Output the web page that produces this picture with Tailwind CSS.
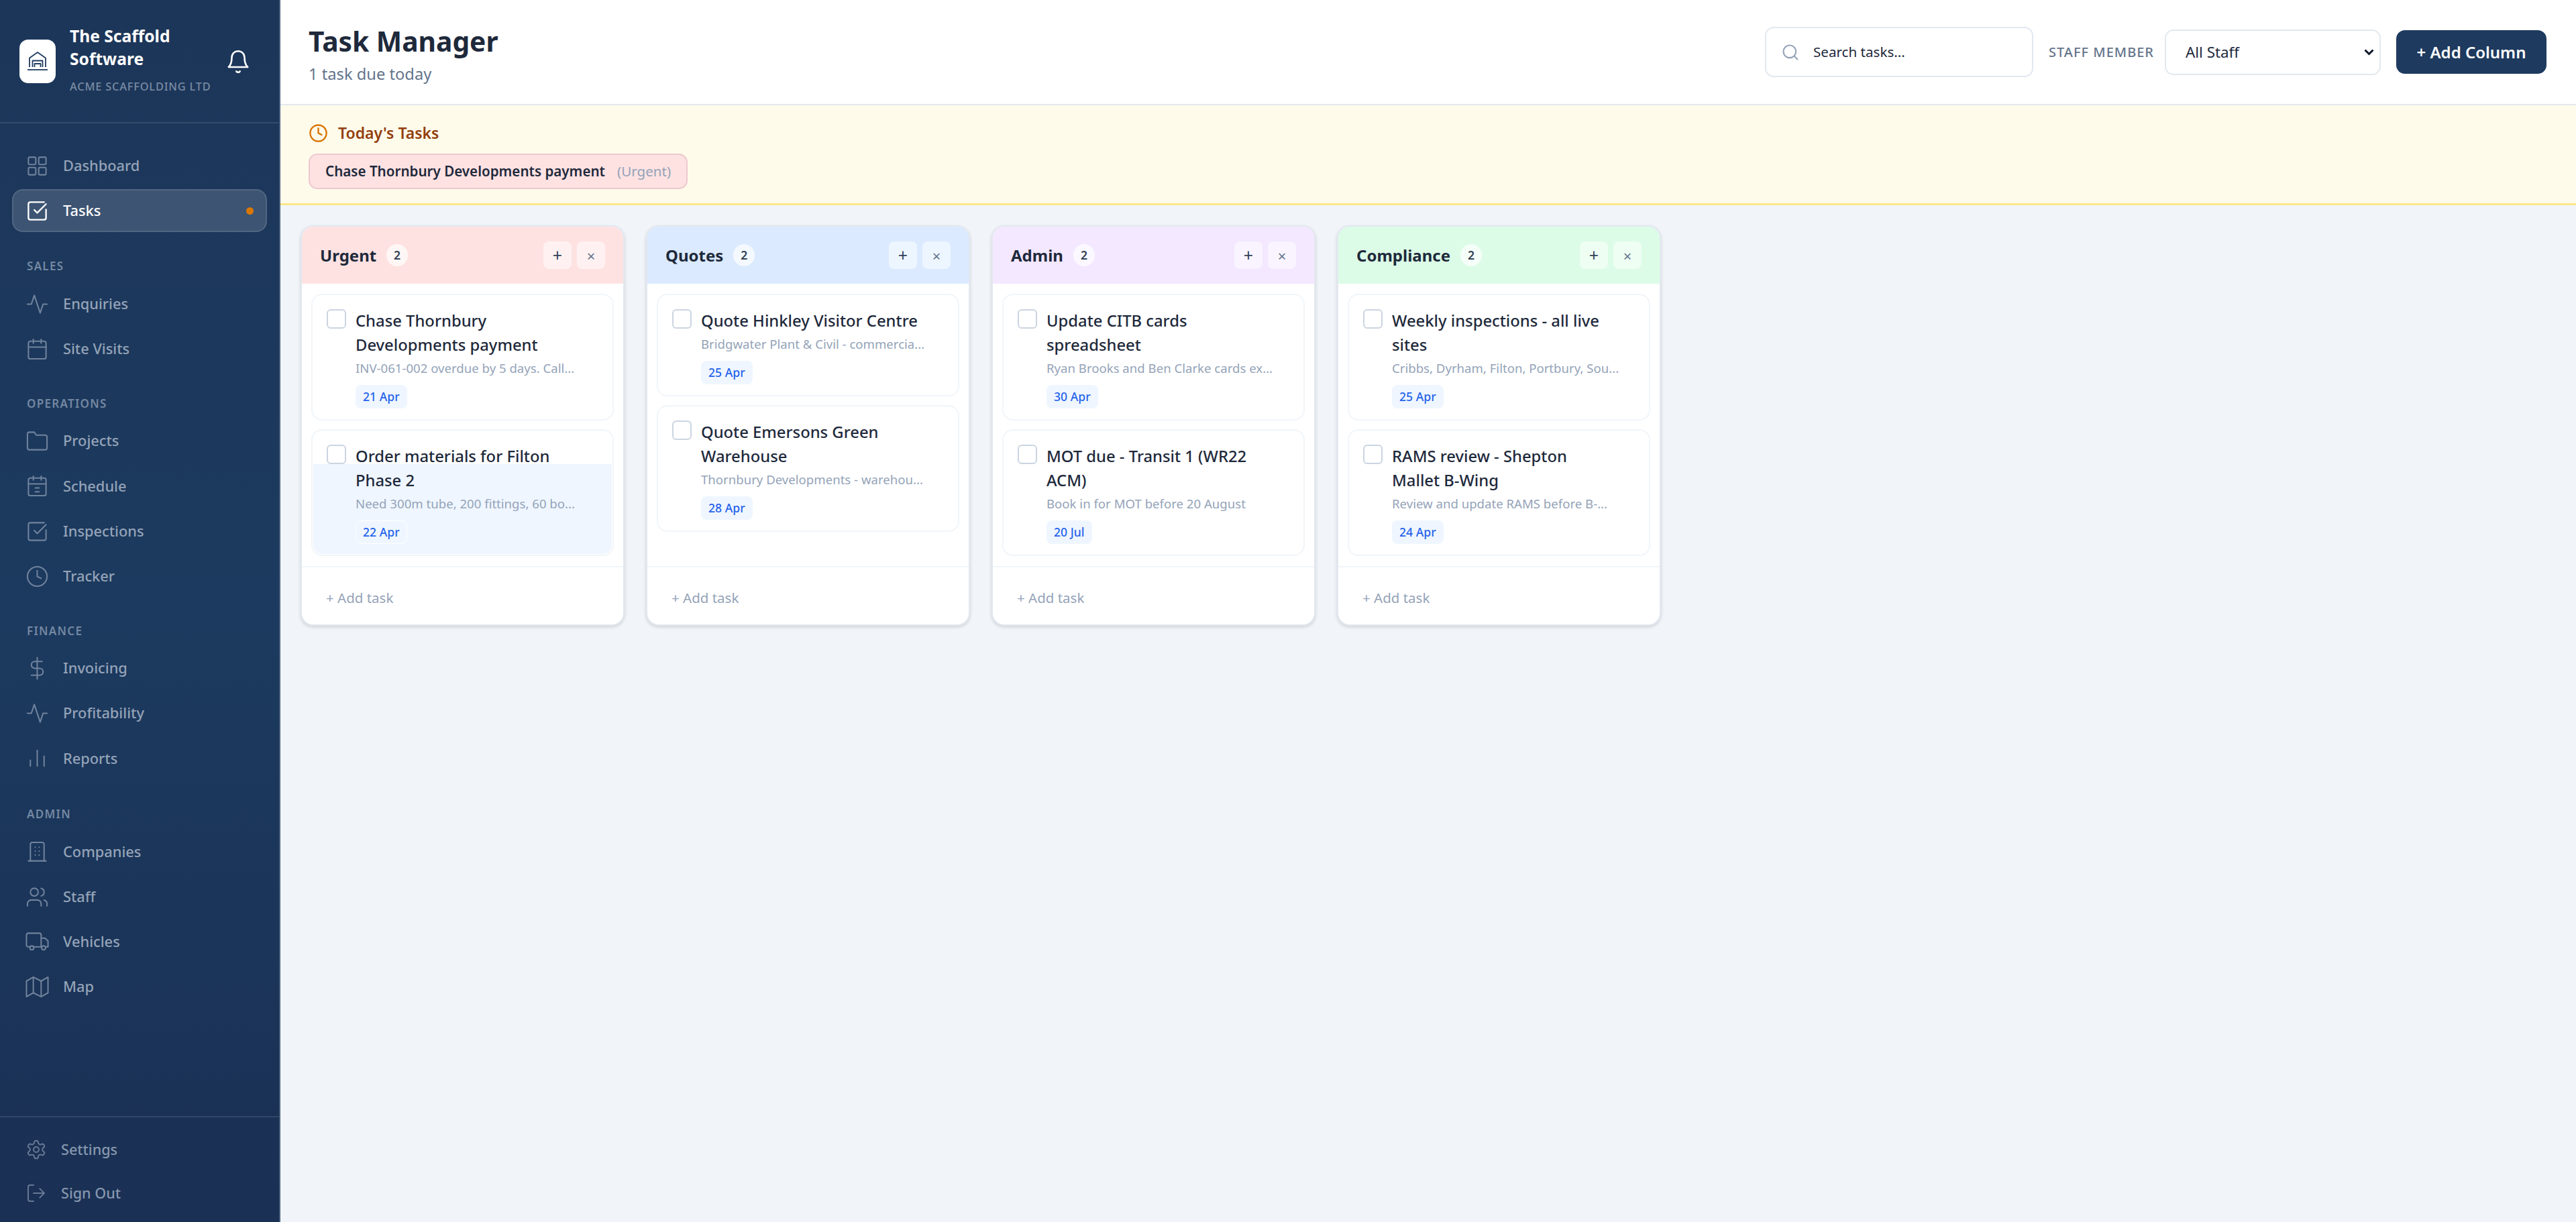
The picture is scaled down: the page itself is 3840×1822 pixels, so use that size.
<!DOCTYPE html>
<html lang="en">
<head>
    <meta charset="UTF-8">
    <meta name="viewport" content="width=device-width, initial-scale=1.0">
    <title>Task Manager</title>
    <script src="https://cdn.jsdelivr.net/npm/@tailwindcss/browser@4"></script>
</head>
<body class="h-[1822px] w-[3840px] overflow-hidden bg-[#f1f5f9] font-['Noto_Sans',sans-serif] text-[#1e293b]">
<div class="flex h-full">

    <!-- Sidebar -->
    <aside class="flex h-full w-[418px] shrink-0 flex-col border-r-2 border-[#4a5f7d] bg-linear-to-b from-[#1c3659] via-[#1c3a5f] to-[#1a3054]">
        <div class="flex h-[184px] items-center border-b-2 border-white/10 pl-[29px] pr-[42px]">
            <div class="flex h-[65px] w-[54px] shrink-0 items-center justify-center rounded-[13px] bg-white">
                <svg class="h-[30px] w-[30px]" viewBox="0 0 30 30" fill="none" stroke="#1e3a5f" stroke-width="1.8" stroke-linejoin="round">
                    <path d="M3 24V10.5L15 2l12 8.5V24"/>
                    <path d="M7.5 24V14.5h15V24"/>
                    <path d="M10.5 24v-5h9v5"/>
                    <path d="M0 28h30"/>
                </svg>
            </div>
            <div class="mb-[5px] ml-[21px] min-w-0 flex-1">
                <div class="text-[24.6px] leading-[34px] font-bold text-white">The Scaffold Software</div>
                <div class="mt-[13px] text-[16.4px] leading-[22px] font-medium tracking-[0.8px] whitespace-nowrap text-[#7b8ca4]">ACME SCAFFOLDING LTD</div>
            </div>
            <svg class="h-[38px] w-[38px] shrink-0 translate-y-[1px]" viewBox="0 0 24 24" fill="none" stroke="#fff" stroke-width="1.6" stroke-linecap="round" stroke-linejoin="round">
                <path d="M18 8A6 6 0 0 0 6 8c0 7-3 9-3 9h18s-3-2-3-9"/>
                <path d="M13.73 21a2 2 0 0 1-3.46 0"/>
            </svg>
        </div>

        <nav class="flex-1 px-[18px] pt-[31px] text-[21.8px] font-medium text-[#94a3b8]">
            <a class="mb-[3.2px] flex h-[64px] items-center gap-[21px] pl-[20px]">
                <svg class="h-[35px] w-[35px] shrink-0 opacity-70" viewBox="0 0 24 24" fill="none" stroke="currentColor" stroke-width="1.4" stroke-linejoin="round"><rect x="3" y="3" width="7.5" height="7.5" rx="1"/><rect x="13.5" y="3" width="7.5" height="7.5" rx="1"/><rect x="3" y="13.5" width="7.5" height="7.5" rx="1"/><rect x="13.5" y="13.5" width="7.5" height="7.5" rx="1"/></svg>
                Dashboard
            </a>
            <a class="mb-[3.2px] flex h-[64px] items-center gap-[21px] rounded-[16px] border-2 border-white/10 bg-white/15 pl-[18px] pr-[18px] text-white">
                <svg class="h-[35px] w-[35px] shrink-0" viewBox="0 0 24 24" fill="none" stroke="currentColor" stroke-width="1.6" stroke-linecap="round" stroke-linejoin="round"><path d="M21 10.5V19a2 2 0 0 1-2 2H5a2 2 0 0 1-2-2V5a2 2 0 0 1 2-2h14"/><path d="m9 11 3 3 9-9"/></svg>
                Tasks
                <span class="ml-auto h-[11px] w-[11px] rounded-full bg-[#d97706]"></span>
            </a>

            <div class="mb-[12px] pt-[36px] pl-[22px] text-[17px] leading-[24px] font-semibold tracking-[1.3px] text-[#7488a2]">SALES</div>
            <a class="mb-[3.2px] flex h-[64px] items-center gap-[21px] pl-[20px]">
                <svg class="h-[35px] w-[35px] shrink-0 opacity-70" viewBox="0 0 24 24" fill="none" stroke="currentColor" stroke-width="1.4" stroke-linecap="round" stroke-linejoin="round"><path d="M22 12h-4l-3 9L9 3l-3 9H2"/></svg>
                Enquiries
            </a>
            <a class="mb-[3.2px] flex h-[64px] items-center gap-[21px] pl-[20px]">
                <svg class="h-[35px] w-[35px] shrink-0 opacity-70" viewBox="0 0 24 24" fill="none" stroke="currentColor" stroke-width="1.4" stroke-linecap="round" stroke-linejoin="round"><rect x="3" y="4" width="18" height="18" rx="2"/><path d="M16 2v4M8 2v4M3 10h18"/></svg>
                Site Visits
            </a>

            <div class="mb-[12px] pt-[34px] pl-[22px] text-[17px] leading-[24px] font-semibold tracking-[1.3px] text-[#7488a2]">OPERATIONS</div>
            <a class="mb-[3.2px] flex h-[64px] items-center gap-[21px] pl-[20px]">
                <svg class="h-[35px] w-[35px] shrink-0 opacity-70" viewBox="0 0 24 24" fill="none" stroke="currentColor" stroke-width="1.4" stroke-linecap="round" stroke-linejoin="round"><path d="M22 19a2 2 0 0 1-2 2H4a2 2 0 0 1-2-2V5a2 2 0 0 1 2-2h5l2 3h9a2 2 0 0 1 2 2z"/></svg>
                Projects
            </a>
            <a class="mb-[3.2px] flex h-[64px] items-center gap-[21px] pl-[20px]">
                <svg class="h-[35px] w-[35px] shrink-0 opacity-70" viewBox="0 0 24 24" fill="none" stroke="currentColor" stroke-width="1.4" stroke-linecap="round" stroke-linejoin="round"><rect x="3" y="4" width="18" height="18" rx="2"/><path d="M16 2v4M8 2v4M3 10h18M10 14h4M10 18h4"/></svg>
                Schedule
            </a>
            <a class="mb-[3.2px] flex h-[64px] items-center gap-[21px] pl-[20px]">
                <svg class="h-[35px] w-[35px] shrink-0 opacity-70" viewBox="0 0 24 24" fill="none" stroke="currentColor" stroke-width="1.4" stroke-linecap="round" stroke-linejoin="round"><path d="M21 10.5V19a2 2 0 0 1-2 2H5a2 2 0 0 1-2-2V5a2 2 0 0 1 2-2h14"/><path d="m9 11 3 3 9-9"/></svg>
                Inspections
            </a>
            <a class="mb-[3.2px] flex h-[64px] items-center gap-[21px] pl-[20px]">
                <svg class="h-[35px] w-[35px] shrink-0 opacity-70" viewBox="0 0 24 24" fill="none" stroke="currentColor" stroke-width="1.4" stroke-linecap="round" stroke-linejoin="round"><circle cx="12" cy="12" r="10"/><path d="M12 6v6l4 2"/></svg>
                Tracker
            </a>

            <div class="mb-[12px] pt-[34px] pl-[22px] text-[17px] leading-[24px] font-semibold tracking-[1.3px] text-[#7488a2]">FINANCE</div>
            <a class="mb-[3.2px] flex h-[64px] items-center gap-[21px] pl-[20px]">
                <svg class="h-[35px] w-[35px] shrink-0 opacity-70" viewBox="0 0 24 24" fill="none" stroke="currentColor" stroke-width="1.4" stroke-linecap="round" stroke-linejoin="round"><path d="M12 1v22"/><path d="M17 5H9.5a3.5 3.5 0 0 0 0 7h5a3.5 3.5 0 0 1 0 7H6"/></svg>
                Invoicing
            </a>
            <a class="mb-[3.2px] flex h-[64px] items-center gap-[21px] pl-[20px]">
                <svg class="h-[35px] w-[35px] shrink-0 opacity-70" viewBox="0 0 24 24" fill="none" stroke="currentColor" stroke-width="1.4" stroke-linecap="round" stroke-linejoin="round"><path d="M22 12h-4l-3 9L9 3l-3 9H2"/></svg>
                Profitability
            </a>
            <a class="mb-[3.2px] flex h-[64px] items-center gap-[21px] pl-[20px]">
                <svg class="h-[35px] w-[35px] shrink-0 opacity-70" viewBox="0 0 24 24" fill="none" stroke="currentColor" stroke-width="1.4" stroke-linecap="round" stroke-linejoin="round"><path d="M19 20V10M12 20V4M5 20v-6"/></svg>
                Reports
            </a>

            <div class="mb-[12px] pt-[36px] pl-[22px] text-[17px] leading-[24px] font-semibold tracking-[1.3px] text-[#7488a2]">ADMIN</div>
            <a class="mb-[3.2px] flex h-[64px] items-center gap-[21px] pl-[20px]">
                <svg class="h-[35px] w-[35px] shrink-0 opacity-70" viewBox="0 0 24 24" fill="none" stroke="currentColor" stroke-width="1.4" stroke-linecap="round" stroke-linejoin="round"><path d="M5 21V4a2 2 0 0 1 2-2h10a2 2 0 0 1 2 2v17"/><path d="M3 21h18M10 7h.01M14 7h.01M10 11h.01M14 11h.01M10 15h.01M14 15h.01"/></svg>
                Companies
            </a>
            <a class="mb-[3.2px] flex h-[64px] items-center gap-[21px] pl-[20px]">
                <svg class="h-[35px] w-[35px] shrink-0 opacity-70" viewBox="0 0 24 24" fill="none" stroke="currentColor" stroke-width="1.4" stroke-linecap="round" stroke-linejoin="round"><path d="M16 21v-2a4 4 0 0 0-4-4H6a4 4 0 0 0-4 4v2"/><circle cx="9" cy="7" r="4"/><path d="M22 21v-2a4 4 0 0 0-3-3.87"/><path d="M16 3.13a4 4 0 0 1 0 7.75"/></svg>
                Staff
            </a>
            <a class="mb-[3.2px] flex h-[64px] items-center gap-[21px] pl-[20px]">
                <svg class="h-[35px] w-[35px] shrink-0 opacity-70" viewBox="0 0 24 24" fill="none" stroke="currentColor" stroke-width="1.4" stroke-linecap="round" stroke-linejoin="round"><path d="M5 17H3a2 2 0 0 1-2-2V5a2 2 0 0 1 2-2h11a2 2 0 0 1 2 2v12H8"/><path d="M16 8h4l3 3v6h-2"/><circle cx="6.5" cy="18" r="2"/><circle cx="18.5" cy="18" r="2"/><path d="M16 17h.5"/></svg>
                Vehicles
            </a>
            <a class="flex h-[64px] items-center gap-[21px] pl-[20px]">
                <svg class="h-[35px] w-[35px] shrink-0 opacity-70" viewBox="0 0 24 24" fill="none" stroke="currentColor" stroke-width="1.4" stroke-linecap="round" stroke-linejoin="round"><path d="M1 6v16l7-4 8 4 7-4V2l-7 4-8-4z"/><path d="M8 2v16M16 6v16"/></svg>
                Map
            </a>
        </nav>

        <div class="h-[158px] border-t-2 border-white/10 px-[18px] pt-[16px] text-[21.6px] font-medium text-[#8697ae]">
            <a class="flex h-[64px] items-center gap-[21px] pl-[20px]">
                <svg class="h-[32px] w-[32px] shrink-0 opacity-70" viewBox="0 0 24 24" fill="none" stroke="currentColor" stroke-width="1.5" stroke-linecap="round" stroke-linejoin="round"><path d="M12.22 2h-.44a2 2 0 0 0-2 2v.18a2 2 0 0 1-1 1.73l-.43.25a2 2 0 0 1-2 0l-.15-.08a2 2 0 0 0-2.73.73l-.22.38a2 2 0 0 0 .73 2.73l.15.1a2 2 0 0 1 1 1.72v.51a2 2 0 0 1-1 1.74l-.15.09a2 2 0 0 0-.73 2.73l.22.38a2 2 0 0 0 2.73.73l.15-.08a2 2 0 0 1 2 0l.43.25a2 2 0 0 1 1 1.73V20a2 2 0 0 0 2 2h.44a2 2 0 0 0 2-2v-.18a2 2 0 0 1 1-1.73l.43-.25a2 2 0 0 1 2 0l.15.08a2 2 0 0 0 2.73-.73l.22-.39a2 2 0 0 0-.73-2.73l-.15-.08a2 2 0 0 1-1-1.74v-.5a2 2 0 0 1 1-1.74l.15-.09a2 2 0 0 0 .73-2.73l-.22-.38a2 2 0 0 0-2.73-.73l-.15.08a2 2 0 0 1-2 0l-.43-.25a2 2 0 0 1-1-1.73V4a2 2 0 0 0-2-2z"/><circle cx="12" cy="12" r="3"/></svg>
                Settings
            </a>
            <a class="mt-[1px] flex h-[64px] items-center gap-[21px] pl-[20px]">
                <svg class="h-[32px] w-[32px] shrink-0 opacity-70" viewBox="0 0 24 24" fill="none" stroke="currentColor" stroke-width="1.5" stroke-linecap="round" stroke-linejoin="round"><path d="M9 21H5a2 2 0 0 1-2-2V5a2 2 0 0 1 2-2h4"/><path d="m16 17 5-5-5-5M21 12H9"/></svg>
                Sign Out
            </a>
        </div>
    </aside>

    <!-- Main -->
    <main class="flex min-w-0 flex-1 flex-col">
        <header class="flex h-[157px] shrink-0 items-center justify-between border-b-2 border-[#e2e8f0] bg-white pl-[42px] pr-[44px]">
            <div class="pt-[5px]">
                <h1 class="text-[40.7px] leading-[52px] font-bold text-[#1e293b]">Task Manager</h1>
                <p class="mt-[8px] text-[23.7px] leading-[30px] text-[#64748b]">1 task due today</p>
            </div>
            <div class="flex items-center">
                <div class="flex h-[75px] w-[400px] items-center rounded-[13px] border-2 border-[#e2e8f0] pl-[22px]">
                    <svg class="h-[28px] w-[28px] shrink-0" viewBox="0 0 24 24" fill="none" stroke="#94a3b8" stroke-width="1.8" stroke-linecap="round"><circle cx="11" cy="11" r="8"/><path d="m21 21-4.3-4.3"/></svg>
                    <span class="ml-[20px] text-[20.6px] text-[#1e293b]">Search tasks...</span>
                </div>
                <label class="ml-[23px] text-[20px] font-medium tracking-[1px] whitespace-nowrap text-[#64748b]">STAFF MEMBER</label>
                <div class="relative ml-[16px]">
                    <select class="block h-[68px] w-[322px] appearance-none rounded-[13px] border-2 border-[#e2e8f0] bg-white pl-[29px] text-[22.4px] text-[#1e293b]">
                        <option>All Staff</option>
                    </select>
                    <svg class="pointer-events-none absolute top-[29px] right-[10px] h-[10px] w-[15px]" viewBox="0 0 15 10" fill="none" stroke="#0f172a" stroke-width="3"><path d="m1.5 1.5 6 6 6-6"/></svg>
                </div>
                <button class="ml-[23px] h-[65px] w-[224px] rounded-[13px] bg-[#1e3a5f] text-[24px] font-semibold text-white">+ Add Column</button>
            </div>
        </header>

        <section class="h-[149px] shrink-0 border-b-[3px] border-[#fde68a] bg-[#fffbeb] pl-[42px] pt-[27px]">
            <div class="flex h-[28px] items-center gap-[15px]">
                <svg class="h-[29px] w-[29px] shrink-0" viewBox="0 0 24 24" fill="none" stroke="#d97706" stroke-width="2" stroke-linecap="round" stroke-linejoin="round"><circle cx="12" cy="12" r="10"/><path d="M12 6v6l4 2"/></svg>
                <span class="text-[23px] font-semibold text-[#92400e]">Today's Tasks</span>
            </div>
            <div class="mt-[17px] inline-flex h-[53px] items-center rounded-[13px] border-2 border-[#ecc9cf] bg-[#fee2e2] px-[23px] text-[20.6px]">
                <span class="font-semibold text-[#1e293b]">Chase Thornbury Developments payment</span>
                <span class="ml-[18px] text-[#94a3b8]">(Urgent)</span>
            </div>
        </section>

        <div class="flex items-stretch gap-[32px] pl-[30px] pt-[30px]">

            <!-- Urgent -->
            <div class="flex h-[597px] w-[483px] flex-col overflow-hidden rounded-[19px] border-2 border-[#e2e8f0] bg-white shadow-[0_2px_5px_rgba(0,0,0,0.15)]">
                <div class="flex h-[85px] shrink-0 items-center bg-[#fee2e2] pl-[27px] pr-[27px]">
                    <span class="text-[24px] font-bold text-[#1e293b]">Urgent</span>
                    <span class="ml-[15px] flex h-[33px] w-[32px] items-center justify-center rounded-full bg-white/70 text-[17.6px] font-semibold text-[#334155]">2</span>
                    <button class="ml-auto flex h-[41px] w-[42px] items-center justify-center rounded-[8px] bg-white/50 text-[25px] leading-none text-[#334155]">+</button>
                    <button class="ml-[8px] flex h-[41px] w-[42px] items-center justify-center rounded-[8px] bg-white/50 text-[22px] leading-none text-[#64748b]">×</button>
                </div>
                <div class="flex-1 space-y-[13px] px-[14px] pt-[15px]">
                    <div class="flex rounded-[16px] border-2 border-[#f1f5f9] bg-white pl-[21px] pt-[20px] pb-[16px]">
                        <span class="mt-[1px] h-[29px] w-[29px] shrink-0 rounded-[6px] border-2 border-[#cbd5e1] bg-white"></span>
                        <div class="ml-[14px] min-w-0 flex-1 pr-[49px]">
                            <div class="text-[23.8px] leading-[36px] font-medium text-[#1e293b]">Chase Thornbury Developments payment</div>
                            <div class="mt-[2px] text-[18.6px] leading-[29px] whitespace-nowrap text-[#94a3b8]">INV-061-002 overdue by 5 days. Call...</div>
                            <span class="mt-[11px] inline-block h-[35px] rounded-[8px] bg-[#eff6ff] px-[11px] text-[17.6px] leading-[35px] font-medium text-[#2563eb]">21 Apr</span>
                        </div>
                    </div>
                    <div class="relative flex rounded-[16px] border-2 border-[#f1f5f9] bg-white pl-[21px] pt-[20px] pb-[16px]">
                        <div class="absolute inset-x-[1px] top-[50px] bottom-[1px] rounded-b-[14px] bg-[#eff6ff]"></div>
                        <span class="relative mt-[1px] h-[29px] w-[29px] shrink-0 rounded-[6px] border-2 border-[#cbd5e1] bg-white"></span>
                        <div class="relative ml-[14px] min-w-0 flex-1 pr-[49px]">
                            <div class="text-[23.8px] leading-[36px] font-medium text-[#1e293b]">Order materials for Filton Phase 2</div>
                            <div class="mt-[2px] text-[18.6px] leading-[29px] whitespace-nowrap text-[#94a3b8]">Need 300m tube, 200 fittings, 60 bo...</div>
                            <span class="mt-[11px] inline-block h-[35px] rounded-[8px] border border-white bg-[#eff6ff] px-[10px] text-[17.6px] leading-[33px] font-medium text-[#2563eb]">22 Apr</span>
                        </div>
                    </div>
                </div>
                <div class="h-[87px] shrink-0 border-t-2 border-[#f1f5f9] pl-[36px] text-[20.5px] leading-[90px] text-[#94a3b8]">+ Add task</div>
            </div>

            <!-- Quotes -->
            <div class="flex h-[597px] w-[483px] flex-col overflow-hidden rounded-[19px] border-2 border-[#e2e8f0] bg-white shadow-[0_2px_5px_rgba(0,0,0,0.15)]">
                <div class="flex h-[85px] shrink-0 items-center bg-[#dbeafe] pl-[27px] pr-[27px]">
                    <span class="text-[24px] font-bold text-[#1e293b]">Quotes</span>
                    <span class="ml-[15px] flex h-[33px] w-[32px] items-center justify-center rounded-full bg-white/70 text-[17.6px] font-semibold text-[#334155]">2</span>
                    <button class="ml-auto flex h-[41px] w-[42px] items-center justify-center rounded-[8px] bg-white/50 text-[25px] leading-none text-[#334155]">+</button>
                    <button class="ml-[8px] flex h-[41px] w-[42px] items-center justify-center rounded-[8px] bg-white/50 text-[22px] leading-none text-[#64748b]">×</button>
                </div>
                <div class="flex-1 space-y-[13px] px-[14px] pt-[15px]">
                    <div class="flex rounded-[16px] border-2 border-[#f1f5f9] bg-white pl-[21px] pt-[20px] pb-[16px]">
                        <span class="mt-[1px] h-[29px] w-[29px] shrink-0 rounded-[6px] border-2 border-[#cbd5e1] bg-white"></span>
                        <div class="ml-[14px] min-w-0 flex-1 pr-[49px]">
                            <div class="text-[23.8px] leading-[36px] font-medium text-[#1e293b]">Quote Hinkley Visitor Centre</div>
                            <div class="mt-[2px] text-[18.6px] leading-[29px] whitespace-nowrap text-[#94a3b8]">Bridgwater Plant &amp; Civil - commercia...</div>
                            <span class="mt-[11px] inline-block h-[35px] rounded-[8px] bg-[#eff6ff] px-[11px] text-[17.6px] leading-[35px] font-medium text-[#2563eb]">25 Apr</span>
                        </div>
                    </div>
                    <div class="flex rounded-[16px] border-2 border-[#f1f5f9] bg-white pl-[21px] pt-[20px] pb-[16px]">
                        <span class="mt-[1px] h-[29px] w-[29px] shrink-0 rounded-[6px] border-2 border-[#cbd5e1] bg-white"></span>
                        <div class="ml-[14px] min-w-0 flex-1 pr-[49px]">
                            <div class="text-[23.8px] leading-[36px] font-medium text-[#1e293b]">Quote Emersons Green Warehouse</div>
                            <div class="mt-[2px] text-[18.6px] leading-[29px] whitespace-nowrap text-[#94a3b8]">Thornbury Developments - warehou...</div>
                            <span class="mt-[11px] inline-block h-[35px] rounded-[8px] bg-[#eff6ff] px-[11px] text-[17.6px] leading-[35px] font-medium text-[#2563eb]">28 Apr</span>
                        </div>
                    </div>
                </div>
                <div class="h-[87px] shrink-0 border-t-2 border-[#f1f5f9] pl-[36px] text-[20.5px] leading-[90px] text-[#94a3b8]">+ Add task</div>
            </div>

            <!-- Admin -->
            <div class="flex h-[597px] w-[483px] flex-col overflow-hidden rounded-[19px] border-2 border-[#e2e8f0] bg-white shadow-[0_2px_5px_rgba(0,0,0,0.15)]">
                <div class="flex h-[85px] shrink-0 items-center bg-[#f3e8ff] pl-[27px] pr-[27px]">
                    <span class="text-[24px] font-bold text-[#1e293b]">Admin</span>
                    <span class="ml-[15px] flex h-[33px] w-[32px] items-center justify-center rounded-full bg-white/70 text-[17.6px] font-semibold text-[#334155]">2</span>
                    <button class="ml-auto flex h-[41px] w-[42px] items-center justify-center rounded-[8px] bg-white/50 text-[25px] leading-none text-[#334155]">+</button>
                    <button class="ml-[8px] flex h-[41px] w-[42px] items-center justify-center rounded-[8px] bg-white/50 text-[22px] leading-none text-[#64748b]">×</button>
                </div>
                <div class="flex-1 space-y-[13px] px-[14px] pt-[15px]">
                    <div class="flex rounded-[16px] border-2 border-[#f1f5f9] bg-white pl-[21px] pt-[20px] pb-[16px]">
                        <span class="mt-[1px] h-[29px] w-[29px] shrink-0 rounded-[6px] border-2 border-[#cbd5e1] bg-white"></span>
                        <div class="ml-[14px] min-w-0 flex-1 pr-[49px]">
                            <div class="text-[23.8px] leading-[36px] font-medium text-[#1e293b]">Update CITB cards spreadsheet</div>
                            <div class="mt-[2px] text-[18.6px] leading-[29px] whitespace-nowrap text-[#94a3b8]">Ryan Brooks and Ben Clarke cards ex...</div>
                            <span class="mt-[11px] inline-block h-[35px] rounded-[8px] bg-[#eff6ff] px-[11px] text-[17.6px] leading-[35px] font-medium text-[#2563eb]">30 Apr</span>
                        </div>
                    </div>
                    <div class="flex rounded-[16px] border-2 border-[#f1f5f9] bg-white pl-[21px] pt-[20px] pb-[16px]">
                        <span class="mt-[1px] h-[29px] w-[29px] shrink-0 rounded-[6px] border-2 border-[#cbd5e1] bg-white"></span>
                        <div class="ml-[14px] min-w-0 flex-1 pr-[49px]">
                            <div class="text-[23.8px] leading-[36px] font-medium text-[#1e293b]">MOT due - Transit 1 (WR22 ACM)</div>
                            <div class="mt-[2px] text-[18.6px] leading-[29px] whitespace-nowrap text-[#94a3b8]">Book in for MOT before 20 August</div>
                            <span class="mt-[11px] inline-block h-[35px] rounded-[8px] bg-[#eff6ff] px-[11px] text-[17.6px] leading-[35px] font-medium text-[#2563eb]">20 Jul</span>
                        </div>
                    </div>
                </div>
                <div class="h-[87px] shrink-0 border-t-2 border-[#f1f5f9] pl-[36px] text-[20.5px] leading-[90px] text-[#94a3b8]">+ Add task</div>
            </div>

            <!-- Compliance -->
            <div class="flex h-[597px] w-[483px] flex-col overflow-hidden rounded-[19px] border-2 border-[#e2e8f0] bg-white shadow-[0_2px_5px_rgba(0,0,0,0.15)]">
                <div class="flex h-[85px] shrink-0 items-center bg-[#dcfce7] pl-[27px] pr-[27px]">
                    <span class="text-[24px] font-bold text-[#1e293b]">Compliance</span>
                    <span class="ml-[15px] flex h-[33px] w-[32px] items-center justify-center rounded-full bg-white/70 text-[17.6px] font-semibold text-[#334155]">2</span>
                    <button class="ml-auto flex h-[41px] w-[42px] items-center justify-center rounded-[8px] bg-white/50 text-[25px] leading-none text-[#334155]">+</button>
                    <button class="ml-[8px] flex h-[41px] w-[42px] items-center justify-center rounded-[8px] bg-white/50 text-[22px] leading-none text-[#64748b]">×</button>
                </div>
                <div class="flex-1 space-y-[13px] px-[14px] pt-[15px]">
                    <div class="flex rounded-[16px] border-2 border-[#f1f5f9] bg-white pl-[21px] pt-[20px] pb-[16px]">
                        <span class="mt-[1px] h-[29px] w-[29px] shrink-0 rounded-[6px] border-2 border-[#cbd5e1] bg-white"></span>
                        <div class="ml-[14px] min-w-0 flex-1 pr-[49px]">
                            <div class="text-[23.8px] leading-[36px] font-medium text-[#1e293b]">Weekly inspections - all live sites</div>
                            <div class="mt-[2px] text-[18.6px] leading-[29px] whitespace-nowrap text-[#94a3b8]">Cribbs, Dyrham, Filton, Portbury, Sou...</div>
                            <span class="mt-[11px] inline-block h-[35px] rounded-[8px] bg-[#eff6ff] px-[11px] text-[17.6px] leading-[35px] font-medium text-[#2563eb]">25 Apr</span>
                        </div>
                    </div>
                    <div class="flex rounded-[16px] border-2 border-[#f1f5f9] bg-white pl-[21px] pt-[20px] pb-[16px]">
                        <span class="mt-[1px] h-[29px] w-[29px] shrink-0 rounded-[6px] border-2 border-[#cbd5e1] bg-white"></span>
                        <div class="ml-[14px] min-w-0 flex-1 pr-[49px]">
                            <div class="text-[23.8px] leading-[36px] font-medium text-[#1e293b]">RAMS review - Shepton Mallet B-Wing</div>
                            <div class="mt-[2px] text-[18.6px] leading-[29px] whitespace-nowrap text-[#94a3b8]">Review and update RAMS before B-...</div>
                            <span class="mt-[11px] inline-block h-[35px] rounded-[8px] bg-[#eff6ff] px-[11px] text-[17.6px] leading-[35px] font-medium text-[#2563eb]">24 Apr</span>
                        </div>
                    </div>
                </div>
                <div class="h-[87px] shrink-0 border-t-2 border-[#f1f5f9] pl-[36px] text-[20.5px] leading-[90px] text-[#94a3b8]">+ Add task</div>
            </div>

        </div>
    </main>
</div>
</body>
</html>
